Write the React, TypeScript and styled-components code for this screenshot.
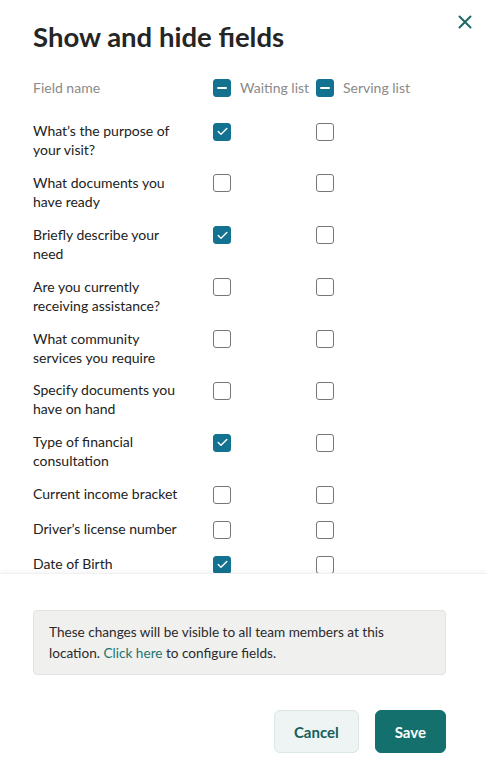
import React, {useState} from 'react';
import styled, {createGlobalStyle} from 'styled-components';

const GlobalStyle = createGlobalStyle`
  * { box-sizing: border-box; }
  html, body { margin: 0; padding: 0; background: #fff; }
  body {
    font-family: Lato, "Open Sans", "Noto Sans", sans-serif;
    color: #222;
    -webkit-font-smoothing: antialiased;
  }
`;

const Panel = styled.div`
  width: 487px;
  height: 767px;
  display: flex;
  flex-direction: column;
  background: white;
  position: relative;
`;

const Top = styled.div`
  padding: 19px 33px 0;
`;

const Title = styled.h1`
  margin: 0;
  font-size: 27.5px;
  line-height: 36px;
  font-weight: 700;
  color: #252525;
`;

const CloseButton = styled.button`
  position: absolute;
  top: 15px;
  right: 15px;
  width: 14px;
  height: 14px;
  border: none;
  background: none;
  padding: 0;
  display: flex;
  align-items: center;
  justify-content: center;
  cursor: pointer;
`;

const Grid = styled.div`
  display: grid;
  grid-template-columns: 180px 103px 1fr;
  align-items: start;
`;

const HeadRow = styled(Grid)`
  margin-top: 23px;
  font-size: 14px;
  line-height: 20px;
  color: #8a8a8a;
`;

const HeadCell = styled.div`
  display: flex;
  align-items: center;
  gap: 9px;
`;

const List = styled.div`
  flex: 1;
  overflow: hidden;
  padding: 23px 33px 0;
  display: flex;
  flex-direction: column;
  gap: 13.9px;
`;

const Row = styled(Grid)`
  font-size: 14px;
  line-height: 19px;
  color: #222;
`;

const Label = styled.div`
  max-width: 150px;
`;

const BoxCell = styled.div`
  height: 21px;
  display: flex;
  align-items: center;
`;

const Box = styled.span<{$on?: boolean}>`
  width: 18px;
  height: 18px;
  border-radius: 3px;
  display: inline-flex;
  align-items: center;
  justify-content: center;
  background: ${p => (p.$on ? '#13728f' : '#fff')};
  border: 1.5px solid ${p => (p.$on ? '#13728f' : '#767676')};
  cursor: pointer;
`;

const Footer = styled.div`
  box-shadow: 0 -2px 4px rgba(0, 0, 0, 0.04);
  border-top: 1px solid #f1f1f1;
  padding: 36px 41px 14px 33px;
  display: flex;
  flex-direction: column;
`;

const Notice = styled.div`
  background: #f0f0ef;
  border: 1px solid #e2e2e0;
  border-radius: 4px;
  padding: 11px 15px 10px;
  font-size: 13.6px;
  line-height: 21px;
  color: #2b2b2b;
`;

const Link = styled.a`
  color: #1b7671;
  text-decoration: none;
`;

const Actions = styled.div`
  margin-top: 35px;
  display: flex;
  justify-content: flex-end;
  gap: 16px;
`;

const Button = styled.button<{$primary?: boolean}>`
  height: 43px;
  padding: 0 19px;
  border-radius: 6px;
  font-family: inherit;
  font-size: 15px;
  font-weight: 700;
  cursor: pointer;
  background: ${p => (p.$primary ? '#13706c' : '#eef4f3')};
  color: ${p => (p.$primary ? '#fff' : '#145e5c')};
  border: 1px solid ${p => (p.$primary ? '#13706c' : '#d9e7e5')};
`;

type Field = {name: string; waiting: boolean; serving: boolean};

const initialFields: Field[] = [
  {name: 'What’s the purpose of your visit?', waiting: true, serving: false},
  {name: 'What documents you have ready', waiting: false, serving: false},
  {name: 'Briefly describe your need', waiting: true, serving: false},
  {name: 'Are you currently receiving assistance?', waiting: false, serving: false},
  {name: 'What community services you require', waiting: false, serving: false},
  {name: 'Specify documents you have on hand', waiting: false, serving: false},
  {name: 'Type of financial consultation', waiting: true, serving: false},
  {name: 'Current income bracket', waiting: false, serving: false},
  {name: 'Driver’s license number', waiting: false, serving: false},
  {name: 'Date of Birth', waiting: true, serving: false},
];

function Check({on, onClick}: {on: boolean; onClick?: () => void}) {
  return (
    <Box $on={on} onClick={onClick}>
      {on && (
        <svg width="11" height="9" viewBox="0 0 11 9" fill="none">
          <path d="M1.2 4.6 4 7.3 9.8 1.4" stroke="#fff" strokeWidth="1.4" strokeLinecap="round" strokeLinejoin="round"/>
        </svg>
      )}
    </Box>
  );
}

function Partial() {
  return (
    <Box $on>
      <svg width="10" height="2" viewBox="0 0 10 2">
        <rect width="10" height="2" rx="1" fill="#fff"/>
      </svg>
    </Box>
  );
}

export default function App() {
  const [fields, setFields] = useState(initialFields);

  const toggle = (i: number, key: 'waiting' | 'serving') =>
    setFields(fs => fs.map((f, j) => (j === i ? {...f, [key]: !f[key]} : f)));

  return (
    <Panel>
      <GlobalStyle/>
      <CloseButton aria-label="Close">
        <svg width="14" height="14" viewBox="0 0 14 14">
          <path d="M1.5 1.5 12.5 12.5M12.5 1.5 1.5 12.5" stroke="#1b6866" strokeWidth="2" strokeLinecap="round"/>
        </svg>
      </CloseButton>
      <Top>
        <Title>Show and hide fields</Title>
        <HeadRow>
          <div>Field name</div>
          <HeadCell><Partial/>Waiting list</HeadCell>
          <HeadCell><Partial/>Serving list</HeadCell>
        </HeadRow>
      </Top>
      <List>
        {fields.map((f, i) => (
          <Row key={f.name}>
            <Label>{f.name}</Label>
            <BoxCell><Check on={f.waiting} onClick={() => toggle(i, 'waiting')}/></BoxCell>
            <BoxCell><Check on={f.serving} onClick={() => toggle(i, 'serving')}/></BoxCell>
          </Row>
        ))}
      </List>
      <Footer>
        <Notice>
          These changes will be visible to all team members at this location.{' '}
          <Link href="#">Click here</Link> to configure fields.
        </Notice>
        <Actions>
          <Button>Cancel</Button>
          <Button $primary>Save</Button>
        </Actions>
      </Footer>
    </Panel>
  );
}
